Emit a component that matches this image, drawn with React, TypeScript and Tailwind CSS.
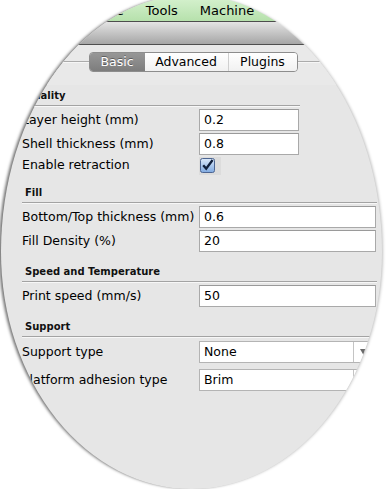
import React from 'react';

const menus = ['File', 'Tools', 'Machine', 'Expert', 'Help'];

function SectionHeader({ title, wide = true }: { title: string; wide?: boolean }) {
  return (
    <div className="mt-[9px] first:mt-0">
      <div className="h-[20px] flex items-center pl-[3px] text-[10px] font-bold text-[#111]">{title}</div>
      <div className={`${wide ? 'w-[355px]' : 'w-[278px]'} border-t border-[#a3a3a3] border-b border-b-[#f7f7f7] h-[2px]`} />
    </div>
  );
}

function TextRow({ label, value, wide = true }: { label: string; value: string; wide?: boolean }) {
  return (
    <div className="flex items-center h-[22px]">
      <span className="w-[177px] shrink-0 whitespace-nowrap text-black">{label}</span>
      <div
        className={`${wide ? 'w-[177px]' : 'w-[100px]'} h-[22px] bg-white border border-[#a9a9a9] border-t-[#9a9a9a] flex items-center pl-[4px] text-black`}
      >
        {value}
      </div>
    </div>
  );
}

function SelectRow({ label, value }: { label: string; value: string }) {
  return (
    <div className="flex items-center h-[22px]">
      <span className="w-[177px] shrink-0 whitespace-nowrap text-black">{label}</span>
      <div className="w-[175px] h-[22px] bg-white border border-[#b4b4b4] flex">
        <div className="flex-1 flex items-center pl-[4px] text-black">{value}</div>
        <div className="w-[20px] border-l border-[#c4c4c4] flex items-center justify-center">
          <svg width="7" height="6" viewBox="0 0 7 6">
            <path d="M0 0h7L3.5 6z" fill="#6a6a6a" />
          </svg>
        </div>
      </div>
    </div>
  );
}

export default function App() {
  return (
    <div className="w-[386px] h-[489px] bg-white overflow-hidden font-['DejaVu_Sans',sans-serif] text-[12.5px]">
      {/* lens */}
      <div className="ml-[1px] mt-[-5px] w-[381px] h-[494px] rounded-[50%/52%_52%_48%_48%] overflow-hidden bg-[#e6e6e6] shadow-[-3px_0_3px_-1px_rgba(0,0,0,0.55),2px_0_3px_-1px_rgba(0,0,0,0.25)]">
        <div className="-ml-[1px] w-[386px]">
          {/* menu bar */}
          <div className="h-[27px] pt-[5px] bg-gradient-to-b from-[#d9f3d2] to-[#b6e1ac] border-b border-[#4d4d4d]">
            <div className="flex gap-[22px] pl-[102px] h-[21px] leading-[21px] text-[13px] text-black">
              {menus.map((m) => (
                <span key={m}>{m}</span>
              ))}
            </div>
          </div>

          {/* toolbar */}
          <div className="h-[23px] bg-gradient-to-b from-[#e4e4e4] to-[#a6a6a6] border-b border-[#4f4f4f]" />

          {/* tabs */}
          <div className="h-[40px] pt-[7px] bg-[#e9e9e9]">
            <div className="flex items-center h-[20px]">
              <div className="flex-1 h-[2px] border-t border-[#ababab] border-b border-b-[#f6f6f6]" />
              <div className="flex h-[20px] rounded-[4px] border border-[#8d8d8d] overflow-hidden text-[12.5px]">
                <div className="w-[55px] flex items-center justify-center bg-gradient-to-b from-[#979797] to-[#7d7d7d] text-white [text-shadow:0_-1px_0_rgba(0,0,0,0.35)]">
                  Basic
                </div>
                <div className="w-[83px] flex items-center justify-center bg-gradient-to-b from-white to-[#f1f1f1] text-black">
                  Advanced
                </div>
                <div className="w-[69px] flex items-center justify-center bg-gradient-to-b from-white to-[#f1f1f1] text-black border-l border-[#cfcfcf]">
                  Plugins
                </div>
              </div>
              <div className="flex-1 h-[2px] border-t border-[#ababab] border-b border-b-[#f6f6f6]" />
            </div>
          </div>

          {/* settings panel */}
          <div className="pl-[22px]">
            <SectionHeader title="Quality" wide={false} />
            <div className="mt-[2px] flex flex-col gap-[2px]">
              <TextRow label="Layer height (mm)" value="0.2" wide={false} />
              <TextRow label="Shell thickness (mm)" value="0.8" wide={false} />
              <div className="flex items-center h-[15px] mt-[1px]">
                <span className="w-[177px] shrink-0 text-black">Enable retraction</span>
                <div className="w-[22px] h-[18px] bg-[#dcdcdc] flex items-center pl-[1px]">
                  <svg width="15" height="15" viewBox="0 0 15 15">
                    <defs>
                      <linearGradient id="cb" x1="0" y1="0" x2="0" y2="1">
                        <stop offset="0" stopColor="#dbe9fa" />
                        <stop offset="1" stopColor="#7fa9e0" />
                      </linearGradient>
                    </defs>
                    <rect x="0.5" y="0.5" width="14" height="14" rx="2" fill="url(#cb)" stroke="#4d6591" />
                    <path d="M3.2 7.2l3 3.4L12.6 2" fill="none" stroke="#10203c" strokeWidth="2.3" />
                  </svg>
                </div>
              </div>
            </div>

            <SectionHeader title="Fill" />
            <div className="mt-[2px] flex flex-col gap-[2px]">
              <TextRow label="Bottom/Top thickness (mm)" value="0.6" />
              <TextRow label="Fill Density (%)" value="20" />
            </div>

            <SectionHeader title="Speed and Temperature" />
            <div className="mt-[2px] flex flex-col gap-[2px]">
              <TextRow label="Print speed (mm/s)" value="50" />
            </div>

            <SectionHeader title="Support" />
            <div className="mt-[3px] flex flex-col gap-[6px]">
              <SelectRow label="Support type" value="None" />
              <SelectRow label="Platform adhesion type" value="Brim" />
            </div>
          </div>
        </div>
      </div>
    </div>
  );
}
